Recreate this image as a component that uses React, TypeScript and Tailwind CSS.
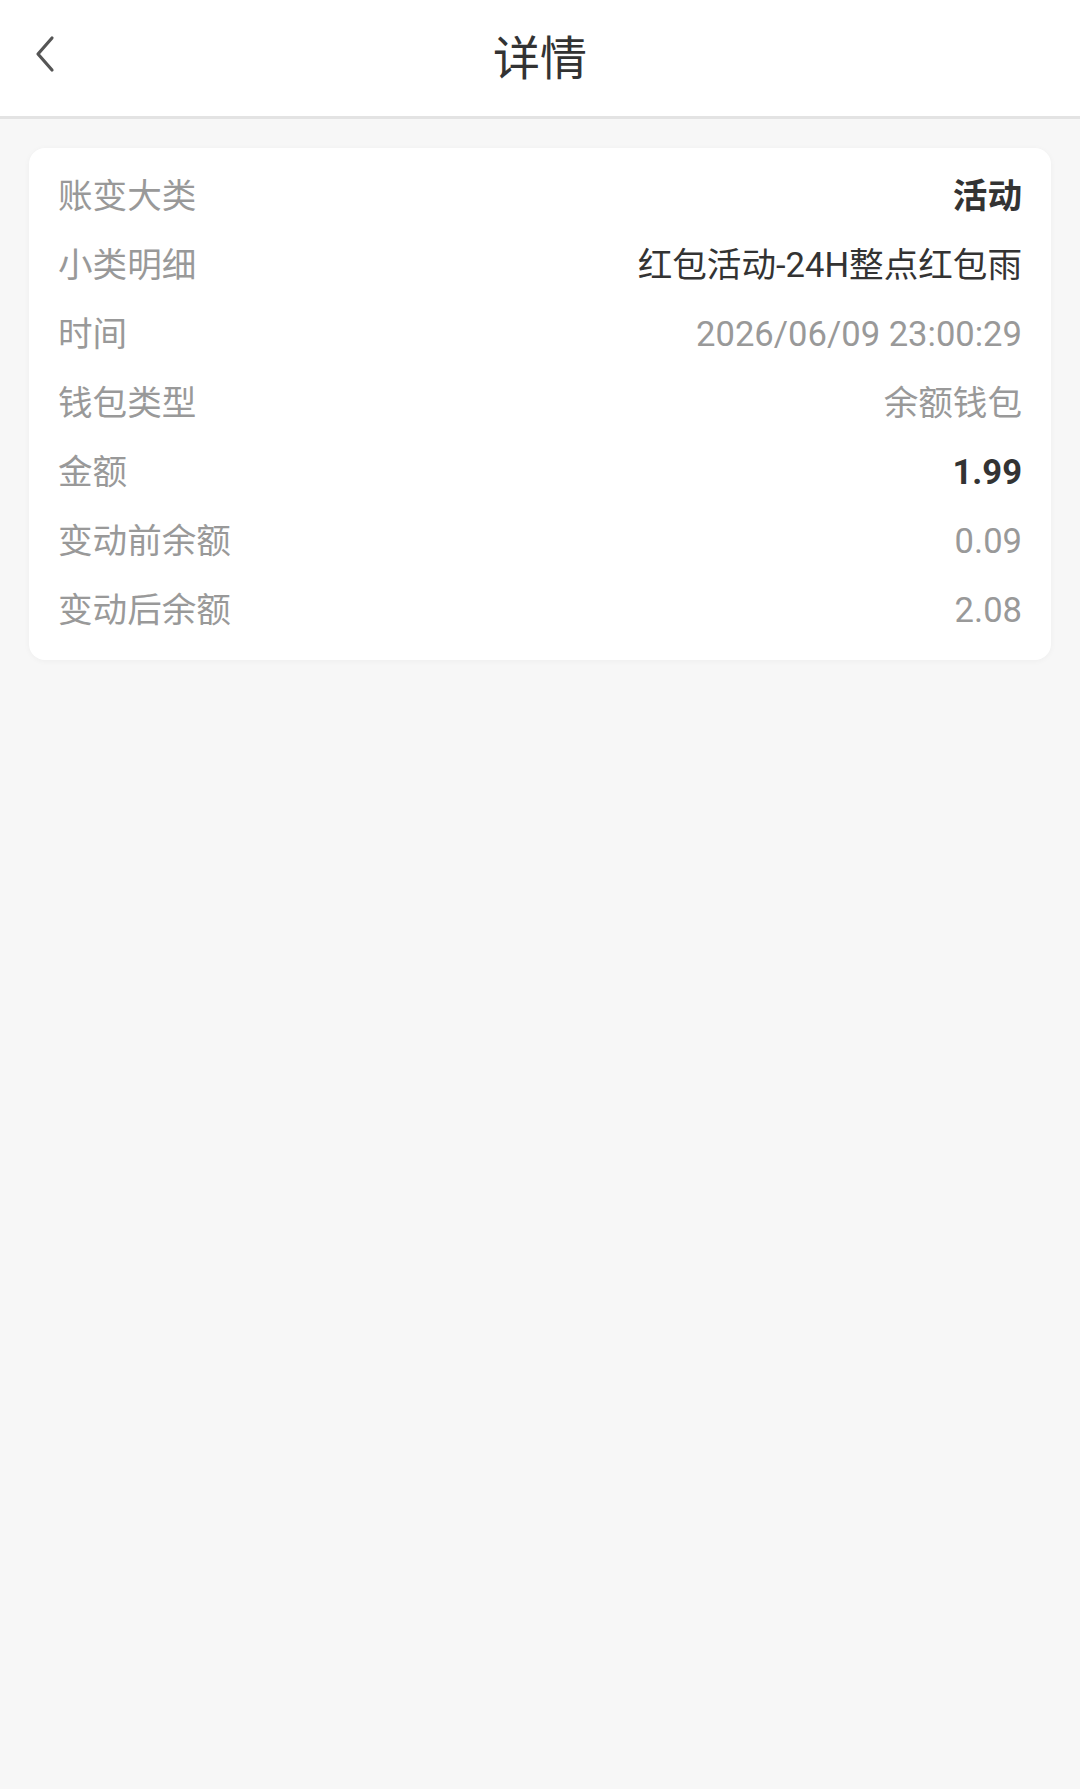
import React from "react";

const rows: { label: string; value: string; cls: string }[] = [
  { label: "账变大类", value: "活动", cls: "text-[#333333] font-bold" },
  { label: "小类明细", value: "红包活动-24H整点红包雨", cls: "text-[#333333]" },
  { label: "时间", value: "2026/06/09 23:00:29", cls: "text-[#999999]" },
  { label: "钱包类型", value: "余额钱包", cls: "text-[#999999]" },
  { label: "金额", value: "1.99", cls: "text-[#333333] font-bold" },
  { label: "变动前余额", value: "0.09", cls: "text-[#999999]" },
  { label: "变动后余额", value: "2.08", cls: "text-[#999999]" },
];

export default function App() {
  return (
    <div
      className="min-h-[1789px] w-full bg-[#f7f7f7]"
      style={{ fontFamily: "Roboto, 'Noto Sans CJK SC', sans-serif" }}
    >
      <header className="relative flex h-[119px] items-center justify-center border-b-[3px] border-[#e3e3e3] bg-white">
        <button className="absolute left-[30px] top-[34px] flex h-[40px] w-[30px] items-center justify-center">
          <svg width="26" height="38" viewBox="0 0 26 38" fill="none">
            <path d="M20 3 L6 19 L20 35" stroke="#555555" strokeWidth="3.2" strokeLinecap="round" strokeLinejoin="round" />
          </svg>
        </button>
        <h1 className="text-[47px] font-normal leading-none text-[#333333]">详情</h1>
      </header>
      <div className="px-[29px] pt-[29px]">
        <div className="rounded-[16px] bg-white px-[29px] pb-[15px] pt-[14px] shadow-[0_1px_6px_rgba(0,0,0,0.04)]">
          {rows.map((r) => (
            <div key={r.label} className="flex h-[69px] items-center justify-between text-[34.6px]">
              <span className="text-[#999999]">{r.label}</span>
              <span className={r.cls}>{r.value}</span>
            </div>
          ))}
        </div>
      </div>
    </div>
  );
}
